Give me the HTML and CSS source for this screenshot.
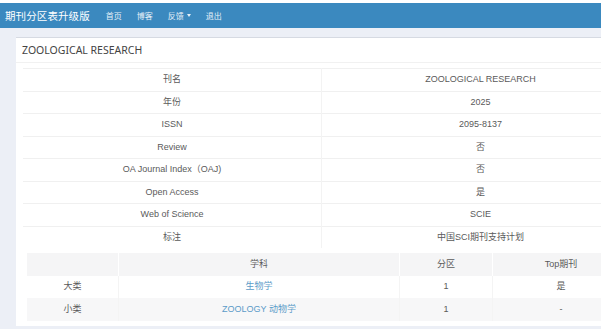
FILE: index.html
```html
<!DOCTYPE html>
<html lang="zh">
<head>
<meta charset="utf-8">
<link rel="stylesheet" href="styles.css">
</head>
<body>
<div class="page">
  <nav class="navbar">
    <span class="brand">期刊分区表升级版</span>
    <a class="nav-link">首页</a>
    <a class="nav-link">博客</a>
    <a class="nav-link">反馈 <span class="caret"></span></a>
    <a class="nav-link">退出</a>
  </nav>
  <div class="content">
    <div class="card">
      <div class="card-header">ZOOLOGICAL RESEARCH</div>
      <table class="info">
        <tr><td>刊名</td><td>ZOOLOGICAL RESEARCH</td></tr>
        <tr><td>年份</td><td>2025</td></tr>
        <tr><td>ISSN</td><td>2095-8137</td></tr>
        <tr><td>Review</td><td>否</td></tr>
        <tr><td>OA Journal Index（OAJ)</td><td>否</td></tr>
        <tr><td>Open Access</td><td>是</td></tr>
        <tr><td>Web of Science</td><td>SCIE</td></tr>
        <tr><td>标注</td><td>中国SCI期刊支持计划</td></tr>
      </table>
      <table class="subj">
        <tr class="head"><th class="c1"></th><th class="c2">学科</th><th class="c3">分区</th><th class="c4">Top期刊</th></tr>
        <tr><td>大类</td><td class="link">生物学</td><td>1</td><td>是</td></tr>
        <tr class="alt"><td>小类</td><td class="link">ZOOLOGY 动物学</td><td>1</td><td>-</td></tr>
      </table>
    </div>
  </div>
</div>
</body>
</html>
```

FILE: styles.css
```css
html, body {
  margin: 0;
  padding: 0;
  background: #fff;
  overflow: hidden;
}
body {
  font-family: "Liberation Sans", "Noto Sans CJK SC", sans-serif;
  color: #555;
}
.page {
  width: 601px;
  height: 326px;
  overflow: hidden;
  padding-top: 3px;
  background: #fff;
}
.navbar {
  height: 25px;
  background: #3b89bf;
  display: flex;
  align-items: center;
  padding-left: 5px;
  font-family: "Noto Sans CJK SC", sans-serif;
}
.brand {
  color: #fff;
  font-size: 10.5px;
  letter-spacing: 0.1px;
  margin-right: 16px;
}
.nav-link {
  color: #e6f0f8;
  font-size: 8px;
  margin-right: 15px;
  display: flex;
  align-items: center;
}
.caret {
  display: inline-block;
  width: 0;
  height: 0;
  border-left: 2.5px solid transparent;
  border-right: 2.5px solid transparent;
  border-top: 3px solid #e6f0f8;
  margin-left: 3px;
}
.content {
  background: #eceff6;
  height: 298px;
  padding: 9px 0 0 16px;
}
.card {
  width: 640px;
  background: #fff;
  border-top: 1px solid #d6dae2;
  height: 288px;
}
.card-header {
  height: 24px;
  line-height: 24px;
  padding-left: 6px;
  font-family: "Noto Sans", "Noto Sans CJK SC", sans-serif;
  font-size: 10.5px;
  color: #444;
  border-bottom: 1px solid #f1f1f1;
}
table {
  border-collapse: collapse;
  font-size: 9px;
  line-height: 11px;
  text-align: center;
}
.info {
  margin: 5px 0 0 7px;
  width: 616px;
}
.info td {
  height: 21.5px;
  padding: 0;
  border-top: 1px solid #f0f0f0;
  color: #5a5a5a;
}
.info td:first-child {
  width: 298px;
  border-right: 1px solid #f3f3f3;
}
.subj {
  margin: 5px 0 0 11px;
  width: 603px;
}
.subj th, .subj td {
  height: 22.5px;
  padding: 0;
  font-weight: normal;
  color: #5a5a5a;
}
.subj .head th {
  background: #f5f5f6;
  border-right: 1px solid #fff;
}
.subj .c1 { width: 91px; }
.subj .c2 { width: 280px; }
.subj .c3 { width: 92px; }
.subj td {
  border-right: 1px solid #f4f4f4;
}
.subj .alt td {
  background: #f7f7f8;
}
.subj .link {
  color: #5b9bc8;
}
```
